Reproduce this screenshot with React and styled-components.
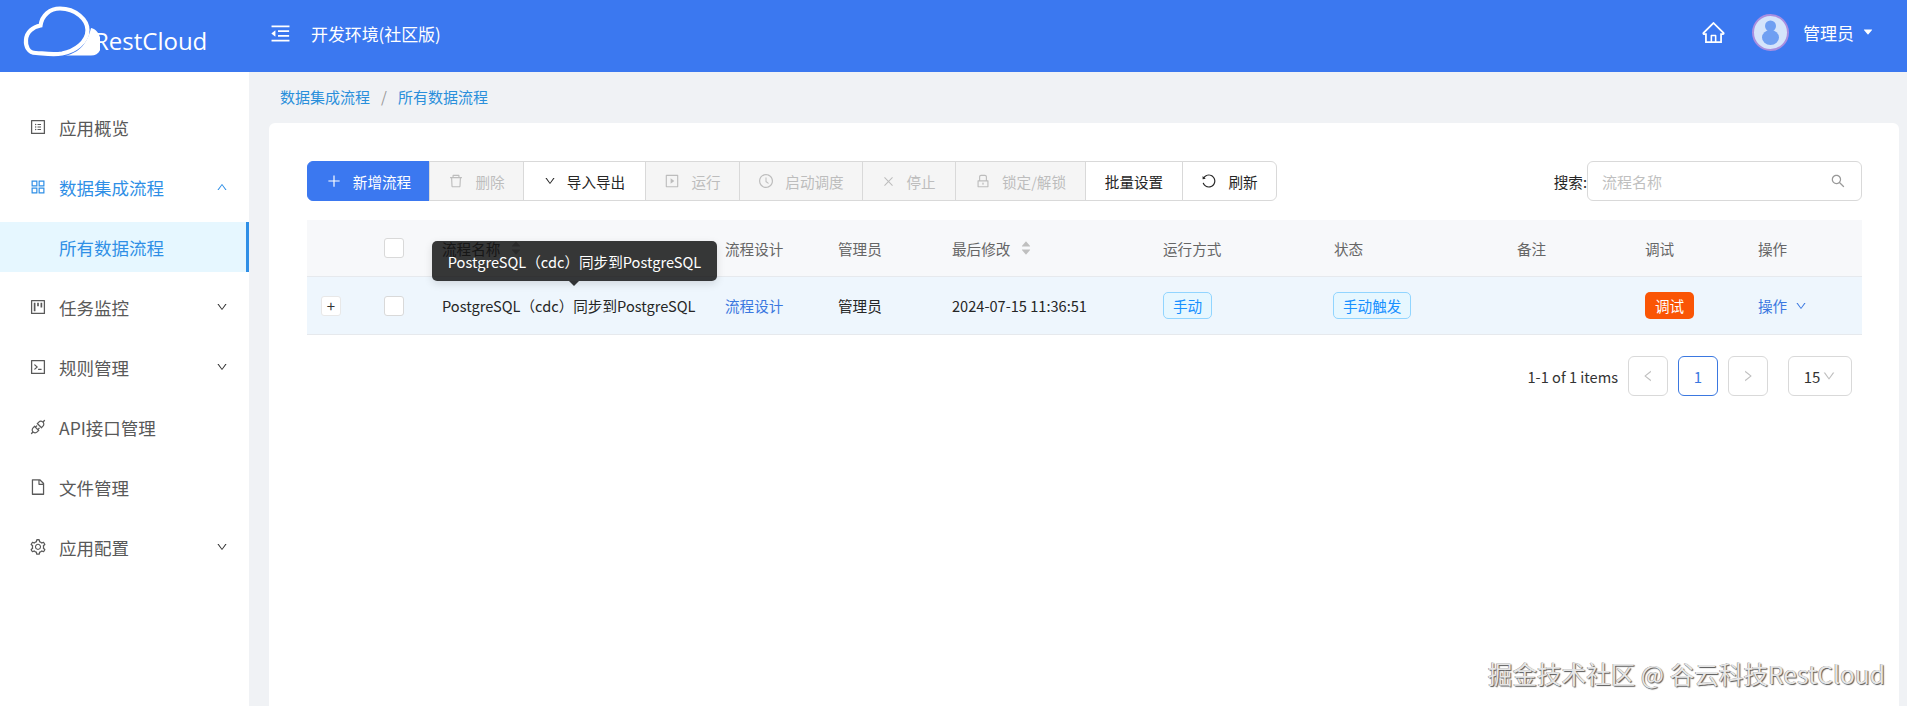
import React from "react";
import styled, { createGlobalStyle } from "styled-components";
import {
  AiOutlineProfile, AiOutlineAppstore, AiOutlineProject, AiOutlineCode, AiOutlineApi, AiOutlineFile,
  AiOutlineSetting, AiOutlineUp, AiOutlineDown, AiOutlinePlus, AiOutlineDelete, AiOutlinePlaySquare,
  AiOutlineClockCircle, AiOutlineClose, AiOutlineLock, AiOutlineReload, AiOutlineSearch, AiOutlineLeft,
  AiOutlineRight, AiOutlineHome, AiFillCaretDown, AiFillCaretUp, AiOutlineMenuFold,
} from "react-icons/ai";

const Global = createGlobalStyle`
  html, body { margin: 0; height: 100%; overflow: hidden; }
  body { font-family: "Noto Sans CJK SC", "Liberation Sans", sans-serif; background: #f0f2f5; }
  * { box-sizing: border-box; }
`;

const Page = styled.div`
  height: 100vh;
  display: flex;
  flex-direction: column;
  position: relative;
`;

const Header = styled.header`
  height: 72px;
  flex: none;
  background: #3b78f0;
  color: #fff;
  display: flex;
  align-items: center;
`;

const LogoBox = styled.div`
  width: 270px;
  display: flex;
  align-items: center;
  padding-left: 15px;
  height: 100%;
  flex: none;
`;

const LogoText = styled.span`
  font-family: "Open Sans", "Liberation Sans", sans-serif;
  font-size: 24px;
  margin: 8px 0 0 -6px;
`;

const Fold = styled.span`
  display: flex;
  font-size: 23px;
  margin: -6px 19px 0 -1px;
`;

const EnvTitle = styled.span`
  font-size: 17px;
  margin-top: -5px;
  letter-spacing: -0.1px;
`;

const UserBox = styled.div`
  margin-left: auto;
  display: flex;
  align-items: center;
  padding-right: 33px;
  margin-top: -8px;
`;

const HomeIcon = styled.span`
  display: flex;
  font-size: 25px;
  margin-right: 26px;
`;

const UserName = styled.span`
  font-size: 17px;
  margin-left: 14px;
`;

const Caret = styled.span`
  display: flex;
  font-size: 12px;
  margin-left: 8px;
`;

const Body = styled.div`
  flex: 1;
  display: flex;
  min-height: 0;
`;

const Sidebar = styled.aside`
  width: 249px;
  flex: none;
  background: #fff;
  padding-top: 30px;
  display: flex;
  flex-direction: column;
  gap: 10px;
`;

const MenuItem = styled.div`
  height: 50px;
  display: flex;
  align-items: center;
  padding-left: ${(p) => (p.$sub ? "59px" : "29px")};
  font-size: 17.5px;
  color: ${(p) => (p.$active ? "#2f8fe6" : "#595959")};
  background: ${(p) => (p.$sub ? "#e6f7ff" : "transparent")};
  border-right: ${(p) => (p.$sub ? "3px solid #2f8fe6" : "none")};
`;

const MenuIcon = styled.span`
  display: flex;
  width: 30px;
  font-size: 18px;
`;

const MenuArrow = styled.span`
  display: flex;
  margin-left: auto;
  margin-right: 21px;
  font-size: 12px;
  color: ${(p) => (p.$active ? "#2f8fe6" : "#333")};
  stroke: currentColor;
  stroke-width: 50px;
`;

const Main = styled.main`
  flex: 1;
  min-width: 0;
  padding: 0 8px 0 20px;
  display: flex;
  flex-direction: column;
`;

const Crumbs = styled.nav`
  height: 51px;
  flex: none;
  padding: 0 0 2px 11px;
  display: flex;
  align-items: center;
  font-size: 15px;
  color: #2a8fdb;
`;

const CrumbSep = styled.span`
  color: #999;
  margin: 0 11px;
`;

const Card = styled.section`
  flex: 1;
  background: #fff;
  border-radius: 6px 6px 0 0;
  padding: 38px 37px 0 38px;
`;

const Toolbar = styled.div`
  display: flex;
  align-items: center;
  height: 40px;
`;

const ToolButton = styled.div`
  width: ${(p) => p.$w}px;
  height: 40px;
  flex: none;
  display: flex;
  align-items: center;
  justify-content: center;
  gap: 11px;
  font-size: 14.6px;
  margin-left: -1px;
  border: 1px solid ${(p) => (p.$primary ? "#3b78f0" : "#d9d9d9")};
  background: ${(p) => (p.$primary ? "#3b78f0" : p.$disabled ? "#f5f5f5" : "#fff")};
  color: ${(p) => (p.$primary ? "#fff" : p.$disabled ? "#bdbdbd" : "#262626")};
  border-radius: ${(p) => (p.$first ? "6px 0 0 6px" : p.$last ? "0 6px 6px 0" : "0")};
  &:first-child { margin-left: 0; }
  svg { font-size: 16px; flex: none; }
`;

const SearchLabel = styled.span`
  margin-left: auto;
  font-size: 14.6px;
  color: #262626;
`;

const SearchBox = styled.div`
  width: 275px;
  height: 40px;
  border: 1px solid #d9d9d9;
  border-radius: 6px;
  display: flex;
  align-items: center;
  justify-content: space-between;
  padding: 0 15px 0 14px;
  font-size: 15px;
  color: #bfbfbf;
  svg { font-size: 16px; color: #999; }
`;

const Table = styled.div`
  margin-top: 19px;
  position: relative;
`;

const Row = styled.div`
  display: grid;
  grid-template-columns: 77px 58px 283px 113px 114px 211px 171px 183px 128px 113px 104px;
  align-items: center;
  height: ${(p) => (p.$head ? "57px" : "58px")};
  font-size: 14.6px;
  background: ${(p) => (p.$head ? "#f7f8fa" : "#eef6fd")};
  color: ${(p) => (p.$head ? "#666" : "#262626")};
  border-bottom: 1px solid #e6e9ed;
`;

const Cell = styled.div`
  display: flex;
  align-items: center;
  min-width: 0;
`;

const Ellipsis = styled.span`
  display: block;
  width: 258px;
  white-space: nowrap;
  overflow: hidden;
  text-overflow: ellipsis;
`;

const Expand = styled.span`
  width: 20px;
  height: 20px;
  margin-left: 14px;
  border: 1px solid #e8e8e8;
  border-radius: 3px;
  background: #fff;
  color: #333;
  display: flex;
  align-items: center;
  justify-content: center;
  font-size: 15px;
`;

const Check = styled.span`
  width: 20px;
  height: 20px;
  border: 1px solid #d9d9d9;
  border-radius: 3px;
  background: #fff;
`;

const Sorter = styled.span`
  display: flex;
  flex-direction: column;
  margin-left: 10px;
  font-size: 12px;
  color: #bfbfbf;
  svg { margin: -2px 0; }
`;

const Link = styled.span`
  color: #3b78e0;
  display: flex;
  align-items: center;
  gap: 8px;
  svg { font-size: 12px; }
`;

const Tag = styled.span`
  height: 27px;
  padding: 0 ${(p) => p.$pad || 9}px;
  margin-left: ${(p) => p.$left || 0}px;
  display: flex;
  align-items: center;
  border: 1px solid #91d5ff;
  border-radius: 5px;
  background: #e6f7ff;
  color: #1890ff;
`;

const DebugButton = styled.span`
  width: 49px;
  height: 27px;
  border-radius: 5px;
  background: #fa5505;
  color: #fff;
  display: flex;
  align-items: center;
  justify-content: center;
`;

const Tooltip = styled.div`
  position: absolute;
  left: 125px;
  top: 21px;
  height: 40px;
  width: 285px;
  border-radius: 5px;
  background: rgba(0, 0, 0, 0.78);
  color: #fff;
  font-size: 14.6px;
  display: flex;
  align-items: center;
  justify-content: center;
  white-space: nowrap;
  box-shadow: 0 3px 8px rgba(0, 0, 0, 0.12);
  &::after {
    content: "";
    position: absolute;
    left: 137px;
    bottom: -5px;
    border-left: 5px solid transparent;
    border-right: 5px solid transparent;
    border-top: 5px solid rgba(0, 0, 0, 0.78);
  }
`;

const Pager = styled.div`
  display: flex;
  align-items: center;
  justify-content: flex-end;
  gap: 10px;
  margin-top: 21px;
  padding-right: 10px;
`;

const PagerTotal = styled.span`
  font-size: 14.6px;
  color: #333;
`;

const PageBtn = styled.span`
  width: ${(p) => (p.$w ? p.$w : 40)}px;
  height: 40px;
  margin-left: ${(p) => p.$ml || 0}px;
  border: 1px solid ${(p) => (p.$active ? "#3b78e0" : "#d9d9d9")};
  border-radius: 6px;
  display: flex;
  align-items: center;
  justify-content: center;
  font-size: 15px;
  color: ${(p) => (p.$active ? "#3b78e0" : p.$w ? "#333" : "#bfbfbf")};
  svg { font-size: 14px; }
`;

const SizeCaret = styled.span`
  display: flex;
  color: #bfbfbf;
  margin-left: 2px;
`;

const Watermark = styled.div`
  position: absolute;
  right: 22px;
  bottom: 16px;
  font-size: 24.6px;
  line-height: 34px;
  color: #e6e6e6;
  text-shadow: 1px 1px 1px #555, -0.5px -0.5px 0 #888;
  white-space: nowrap;
`;

const Logo = () => (
  <svg width="85" height="65" viewBox="0 0 85 65" fill="none" style={{ flex: "none", marginTop: -7 }}>
    <path d="M50 55.5C61 54 72 46 76 28C84 30 86 38 86 45C86 52 82 55.5 76 55.5Z" fill="#fff" />
    <path
      d="M21 53C13 53 10.500 46 11 40C11.500 32 18 27 25.500 25.500C27 15 35 8.500 45 8.500C61 8.500 72.500 20 72.500 30C72.500 42 60 51 47 53.500C38 55 29 53.500 21 53Z"
      stroke="#fff"
      strokeWidth="4.200"
    />
  </svg>
);

const Avatar = () => (
  <svg width="37" height="37" viewBox="0 0 37 37" style={{ flex: "none" }}>
    <circle cx="18.500" cy="18.500" r="17.500" fill="#d5e4fb" stroke="#a98ee0" strokeWidth="2" />
    <circle cx="18.500" cy="12" r="5.500" fill="#6f9ff2" />
    <ellipse cx="18.500" cy="23.500" rx="8.500" ry="7.500" fill="#6f9ff2" />
  </svg>
);

const menu = [
  { icon: <AiOutlineProfile />, label: "应用概览" },
  { icon: <AiOutlineAppstore />, label: "数据集成流程", arrow: "up", active: true },
  { label: "所有数据流程", sub: true, active: true },
  { icon: <AiOutlineProject />, label: "任务监控", arrow: "down" },
  { icon: <AiOutlineCode />, label: "规则管理", arrow: "down" },
  { icon: <AiOutlineApi />, label: "API接口管理" },
  { icon: <AiOutlineFile />, label: "文件管理" },
  { icon: <AiOutlineSetting />, label: "应用配置", arrow: "down" },
];

const tools = [
  { w: 123, icon: <AiOutlinePlus />, label: "新增流程", primary: true, first: true },
  { w: 95, icon: <AiOutlineDelete />, label: "删除", disabled: true },
  { w: 123, icon: <AiOutlineDown style={{ fontSize: 12 }} />, label: "导入导出" },
  { w: 95, icon: <AiOutlinePlaySquare />, label: "运行", disabled: true },
  { w: 124, icon: <AiOutlineClockCircle />, label: "启动调度", disabled: true },
  { w: 94, icon: <AiOutlineClose style={{ fontSize: 13 }} />, label: "停止", disabled: true },
  { w: 131, icon: <AiOutlineLock />, label: "锁定/解锁", disabled: true },
  { w: 98, label: "批量设置" },
  { w: 95, icon: <AiOutlineReload style={{ transform: "scaleX(-1)" }} />, label: "刷新", last: true },
];

export default function App() {
  return (
    <Page>
      <Global />
      <Header>
        <LogoBox>
          <Logo />
          <LogoText>RestCloud</LogoText>
        </LogoBox>
        <Fold><AiOutlineMenuFold /></Fold>
        <EnvTitle>开发环境(社区版)</EnvTitle>
        <UserBox>
          <HomeIcon><AiOutlineHome /></HomeIcon>
          <Avatar />
          <UserName>管理员</UserName>
          <Caret><AiFillCaretDown /></Caret>
        </UserBox>
      </Header>
      <Body>
        <Sidebar>
          {menu.map((m) => (
            <MenuItem key={m.label} $active={m.active} $sub={m.sub}>
              {m.icon && <MenuIcon>{m.icon}</MenuIcon>}
              {m.label}
              {m.arrow && (
                <MenuArrow $active={m.active}>
                  {m.arrow === "up" ? <AiOutlineUp /> : <AiOutlineDown />}
                </MenuArrow>
              )}
            </MenuItem>
          ))}
        </Sidebar>
        <Main>
          <Crumbs>
            数据集成流程<CrumbSep>/</CrumbSep>所有数据流程
          </Crumbs>
          <Card>
            <Toolbar>
              {tools.map((t) => (
                <ToolButton key={t.label} $w={t.w} $primary={t.primary} $disabled={t.disabled} $first={t.first} $last={t.last}>
                  {t.icon}
                  <span>{t.label}</span>
                </ToolButton>
              ))}
              <SearchLabel>搜索:</SearchLabel>
              <SearchBox>
                流程名称
                <AiOutlineSearch />
              </SearchBox>
            </Toolbar>
            <Table>
              <Row $head>
                <Cell />
                <Cell><Check /></Cell>
                <Cell>流程名称<Sorter><AiFillCaretUp /><AiFillCaretDown /></Sorter></Cell>
                <Cell>流程设计</Cell>
                <Cell>管理员</Cell>
                <Cell>最后修改<Sorter><AiFillCaretUp /><AiFillCaretDown /></Sorter></Cell>
                <Cell>运行方式</Cell>
                <Cell>状态</Cell>
                <Cell>备注</Cell>
                <Cell>调试</Cell>
                <Cell>操作</Cell>
              </Row>
              <Row>
                <Cell><Expand>+</Expand></Cell>
                <Cell><Check /></Cell>
                <Cell><Ellipsis>PostgreSQL（cdc）同步到PostgreSQL</Ellipsis></Cell>
                <Cell><Link>流程设计</Link></Cell>
                <Cell>管理员</Cell>
                <Cell>2024-07-15 11:36:51</Cell>
                <Cell><Tag>手动</Tag></Cell>
                <Cell><Tag $left={-1}>手动触发</Tag></Cell>
                <Cell />
                <Cell><DebugButton>调试</DebugButton></Cell>
                <Cell><Link>操作<AiOutlineDown /></Link></Cell>
              </Row>
              <Tooltip>PostgreSQL（cdc）同步到PostgreSQL</Tooltip>
            </Table>
            <Pager>
              <PagerTotal>1-1 of 1 items</PagerTotal>
              <PageBtn><AiOutlineLeft /></PageBtn>
              <PageBtn $active>1</PageBtn>
              <PageBtn><AiOutlineRight /></PageBtn>
              <PageBtn $w={64} $ml={10}>15<SizeCaret><AiOutlineDown /></SizeCaret></PageBtn>
            </Pager>
          </Card>
        </Main>
      </Body>
      <Watermark>掘金技术社区 @ 谷云科技RestCloud</Watermark>
    </Page>
  );
}
